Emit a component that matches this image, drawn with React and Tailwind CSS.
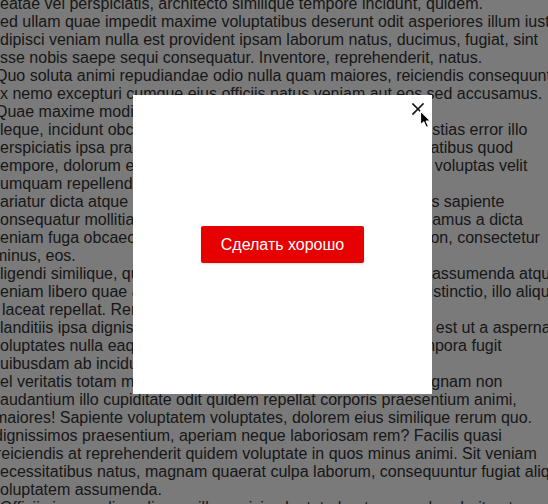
import React from "react";

const lines = [
  { t: "eatae vel perspiciatis, architecto similique tempore incidunt, quidem.", c: "" },
  { t: "ed ullam quae impedit maxime voluptatibus deserunt odit asperiores illum iusto", c: "" },
  { t: "dipisci veniam nulla est provident ipsam laborum natus, ducimus, fugiat, sint", c: "" },
  { t: "sse nobis saepe sequi consequatur. Inventore, reprehenderit, natus.", c: "" },
  { t: "Quo soluta animi repudiandae odio nulla quam maiores, reiciendis consequuntur", c: "-ml-[5px]" },
  { t: "x nemo excepturi cumque eius officiis natus veniam aut eos sed accusamus.", c: "" },
  { t: "Quae maxime modi eveniet quibusdam.", c: "-ml-[5px]" },
  { t: "leque, incidunt obcaecati quis deserunt minima veniam, molestias error illo", c: "" },
  { t: "erspiciatis ipsa praesentium quas magni eveniet nobis voluptatibus quod", c: "" },
  { t: "empore, dolorum error quibusdam asperiores ipsa natus rem voluptas velit", c: "" },
  { t: "umquam repellendus ratione quae sequi.", c: "" },
  { t: "ariatur dicta atque laudantium eveniet odit quia unde sit, nobis sapiente", c: "" },
  { t: "onsequatur mollitia nesciunt ullam doloribus ipsum nisi accusamus a dicta", c: "" },
  { t: "eniam fuga obcaecati perferendis commodi sequi hic dolor, non, consectetur", c: "" },
  { t: "minus, eos.", c: "-ml-[6px]" },
  { t: "ligendi similique, quos inventore dolorem officia totam natus, assumenda atque", c: "" },
  { t: "eniam libero quae aut voluptatum facere nemo quidem sint distinctio, illo aliquid", c: "" },
  { t: "laceat repellat. Rem quas nihil ab.", c: "ml-[2px]" },
  { t: "landitiis ipsa dignissimos quisquam iusto vero optio neque sit est ut a aspernatur", c: "" },
  { t: "oluptates nulla eaque explicabo repudiandae omnis sunt, tempora fugit", c: "" },
  { t: "uibusdam ab incidunt quis eum.", c: "" },
  { t: "el veritatis totam maxime architecto dolores eaque ut sed magnam non", c: "" },
  { t: "audantium illo cupiditate odit quidem repellat corporis praesentium animi,", c: "" },
  { t: "maiores! Sapiente voluptatem voluptates, dolorem eius similique rerum quo.", c: "-ml-[6px]" },
  { t: "dignissimos praesentium, aperiam neque laboriosam rem? Facilis quasi", c: "-ml-[6px]" },
  { t: "reiciendis at reprehenderit quidem voluptate in quos minus animi. Sit veniam", c: "-ml-[4px]" },
  { t: "ecessitatibus natus, magnam quaerat culpa laborum, consequuntur fugiat aliquid", c: "" },
  { t: "oluptatem assumenda.", c: "" },
  { t: "Officiis ipsam eligendi quos illum, nisi voluptate beatae reprehenderit aut.", c: "" },
];

export default function App() {
  return (
    <div className="relative w-[548px] h-[504px] overflow-hidden bg-white font-['Liberation_Sans',Arial,sans-serif]">
      <div className="-mt-[5px] text-[16px] leading-[18px] text-[#333] whitespace-nowrap">
        {lines.map((l, i) => (
          <div key={i} className={l.c}>
            {l.t}
          </div>
        ))}
      </div>

      <div className="absolute inset-0 bg-black/[0.52]" />

      <div className="absolute left-[133px] top-[95px] w-[299px] h-[299px] bg-white flex items-center justify-center">
        <button className="h-[37px] px-5 rounded-[2px] bg-[#e60000] text-white text-[16px] leading-none shadow-[0_1px_2px_rgba(0,0,0,0.15)]">
          Сделать хорошо
        </button>
        <button className="absolute right-[8px] top-[8px] w-[12px] h-[12px] flex items-center justify-center">
          <svg width="12" height="12" viewBox="0 0 12 12">
            <path d="M1 1 L11 11 M11 1 L1 11" stroke="#111" strokeWidth="1.6" strokeLinecap="square" />
          </svg>
        </button>
      </div>

      <svg
        className="absolute left-[419px] top-[110px]"
        width="14"
        height="20"
        viewBox="0 0 14 20"
      >
        <path
          d="M1.5 1 L1.5 15 L4.8 12 L7.3 17.6 L9.6 16.6 L7.2 11.2 L11.6 11.2 Z"
          fill="#000"
          stroke="#fff"
          strokeWidth="1.2"
          strokeLinejoin="round"
        />
      </svg>
    </div>
  );
}
